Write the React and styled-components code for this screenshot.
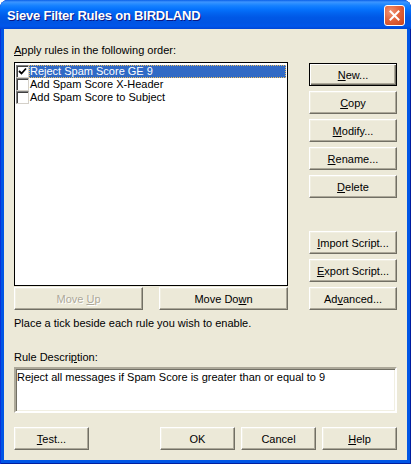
import React from 'react'
import styled, { createGlobalStyle, css } from 'styled-components'

const GlobalStyle = createGlobalStyle`
  html, body {
    margin: 0;
    padding: 0;
    background: #ffffff;
  }
  * { box-sizing: border-box; }
`

const Window = styled.div`
  width: 411px;
  height: 464px;
  display: flex;
  flex-direction: column;
  border-radius: 8px 8px 0 0;
  overflow: hidden;
  background: #0055e5;
  box-shadow: inset 1px 0 #0831d9, inset -1px 0 #001ea0, inset 0 -1px #001ea0;
  font-family: "Liberation Sans", Arial, sans-serif;
  font-size: 11px;
  color: #000;
`

const TitleBar = styled.div`
  height: 29px;
  flex: none;
  display: flex;
  align-items: center;
  justify-content: space-between;
  padding: 0 6px 0 7px;
  background: linear-gradient(to bottom,
    #0a5fe8 0%, #3d95ff 7%, #2b8eff 12%, #1580ff 20%, #0572fd 32%,
    #0264f0 45%, #0058e6 60%, #0054e3 78%, #0056ea 90%, #0046d6 100%);
`

const Title = styled.span`
  font-family: "Liberation Sans", Arial, sans-serif;
  font-weight: bold;
  font-size: 13px;
  letter-spacing: -0.2px;
  color: #ffffff;
  text-shadow: 1px 1px #0a1883;
  padding-top: 1px;
`

const CloseButton = styled.div`
  width: 21px;
  height: 21px;
  border: 1px solid #ffffff;
  border-radius: 3px;
  background: radial-gradient(circle at 30% 30%, #f19474 0%, #e2643d 45%, #c9421b 100%);
  display: flex;
  align-items: center;
  justify-content: center;
  margin-top: 1px;
`

const Body = styled.div`
  flex: 1;
  margin: 0 4px 4px 4px;
  background: #ece9d8;
  display: flex;
  flex-direction: column;
  padding: 15px 10px 10px 10px;
`

const Label = styled.div`
  height: 13px;
  line-height: 13px;
  margin-top: ${p => p.$top || 0}px;
  margin-bottom: ${p => p.$bottom || 0}px;
  white-space: nowrap;
`

const Main = styled.div`
  display: grid;
  grid-template-columns: 274px 88px;
  column-gap: 21px;
`

const LeftCol = styled.div`
  display: flex;
  flex-direction: column;
`

const ListBox = styled.div`
  height: 224px;
  background: #ffffff;
  border: 1px solid #000000;
  padding: 2px 1px;
`

const Row = styled.div`
  height: 13px;
  display: flex;
  align-items: center;
`

const CheckBox = styled.div`
  width: 13px;
  height: 13px;
  flex: none;
  background: #ffffff;
  border: 1px solid;
  border-color: #808080 #d4d0c8 #d4d0c8 #808080;
  box-shadow: inset 1px 1px #404040;
  display: flex;
  align-items: center;
  justify-content: center;
`

const RowText = styled.div`
  flex: 1;
  height: 13px;
  line-height: 13px;
  padding-left: 1px;
  white-space: nowrap;
  ${p => p.$selected && css`
    background: #316ac5;
    color: #ffffff;
    outline: 1px dotted #f0c060;
    outline-offset: -1px;
  `}
`

const MoveRow = styled.div`
  margin-top: 1px;
  display: flex;
  justify-content: space-between;
`

const ButtonFace = styled.div`
  width: ${p => p.$w || 88}px;
  height: 23px;
  flex: none;
  display: flex;
  align-items: center;
  justify-content: center;
  background: #ece9d8;
  white-space: pre;
  border: 1px solid;
  border-color: #ffffff #716f64 #716f64 #ffffff;
  box-shadow: inset -1px -1px #aca899, inset 1px 1px #f1efe2;
  color: ${p => (p.$disabled ? '#aca899' : '#000000')};
  text-shadow: ${p => (p.$disabled ? '1px 1px #ffffff' : 'none')};
  ${p => p.$default && css`
    border-color: #000000;
    box-shadow: inset 1px 1px #ffffff, inset -1px -1px #716f64, inset -2px -2px #aca899;
  `}
  & u { text-decoration: underline; }
`

const Button = ({ children, ...rest }) => (
  <ButtonFace {...rest}>
    <span>{children}</span>
  </ButtonFace>
)

const RightCol = styled.div`
  padding-top: 1px;
  display: flex;
  flex-direction: column;
`

const ButtonStack = styled.div`
  display: flex;
  flex-direction: column;
  gap: 5px;
  margin-top: ${p => (p.$bottom ? 'auto' : '0')};
`

const DescBox = styled.div`
  height: 46px;
  background: #ffffff;
  border: 2px solid;
  border-color: #aca899 #ffffff #ffffff #aca899;
  box-shadow: inset 1px 1px #716f64, inset -1px -1px #f1efe2;
  padding: 2px 1px;
  line-height: 13px;
`

const Footer = styled.div`
  margin-top: 14px;
  display: flex;
  justify-content: space-between;
`

const FooterGroup = styled.div`
  display: flex;
  gap: 6px;
`

const rules = [
  { name: 'Reject Spam Score GE 9', on: true },
  { name: 'Add Spam Score X-Header', on: false },
  { name: 'Add Spam Score to Subject', on: false },
]

export default function App() {
  return (
    <>
      <GlobalStyle />
      <Window>
        <TitleBar>
          <Title>Sieve Filter Rules on BIRDLAND</Title>
          <CloseButton>
            <svg width="11" height="11" viewBox="0 0 11 11">
              <path d="M1.5 1.5 L9.5 9.5 M9.5 1.5 L1.5 9.5" stroke="#ffffff" strokeWidth="2" strokeLinecap="square" />
            </svg>
          </CloseButton>
        </TitleBar>
        <Body>
          <Label $bottom={5}><u>A</u>pply rules in the following order:</Label>
          <Main>
            <LeftCol>
              <ListBox>
                {rules.map((r, i) => (
                  <Row key={r.name}>
                    <CheckBox>
                      {r.on && (
                        <svg width="9" height="9" viewBox="0 0 9 9">
                          <path d="M1 4 L3.5 6.5 L8 1.5" stroke="#000" strokeWidth="1.8" fill="none" />
                        </svg>
                      )}
                    </CheckBox>
                    <RowText $selected={i === 0}>{r.name}</RowText>
                  </Row>
                ))}
              </ListBox>
              <MoveRow>
                <Button $w={129} $disabled>Move <u>U</u>p</Button>
                <Button $w={129}>Move Do<u>w</u>n</Button>
              </MoveRow>
            </LeftCol>
            <RightCol>
              <ButtonStack>
                <Button $default><u>N</u>ew...</Button>
                <Button><u>C</u>opy</Button>
                <Button><u>M</u>odify...</Button>
                <Button><u>R</u>ename...</Button>
                <Button><u>D</u>elete</Button>
              </ButtonStack>
              <ButtonStack $bottom>
                <Button><u>I</u>mport Script...</Button>
                <Button><u>E</u>xport Script...</Button>
                <Button>Ad<u>v</u>anced...</Button>
              </ButtonStack>
            </RightCol>
          </Main>
          <Label $top={7}>Place a tick beside each rule you wish to enable.</Label>
          <Label $top={21} $bottom={3}>Rule Descri<u>p</u>tion:</Label>
          <DescBox>Reject all messages if Spam Score is greater than or equal to 9</DescBox>
          <Footer>
            <Button $w={75}><u>T</u>est...</Button>
            <FooterGroup>
              <Button $w={75}>OK</Button>
              <Button $w={75}>Cancel</Button>
              <Button $w={75}><u>H</u>elp</Button>
            </FooterGroup>
          </Footer>
        </Body>
      </Window>
    </>
  )
}
